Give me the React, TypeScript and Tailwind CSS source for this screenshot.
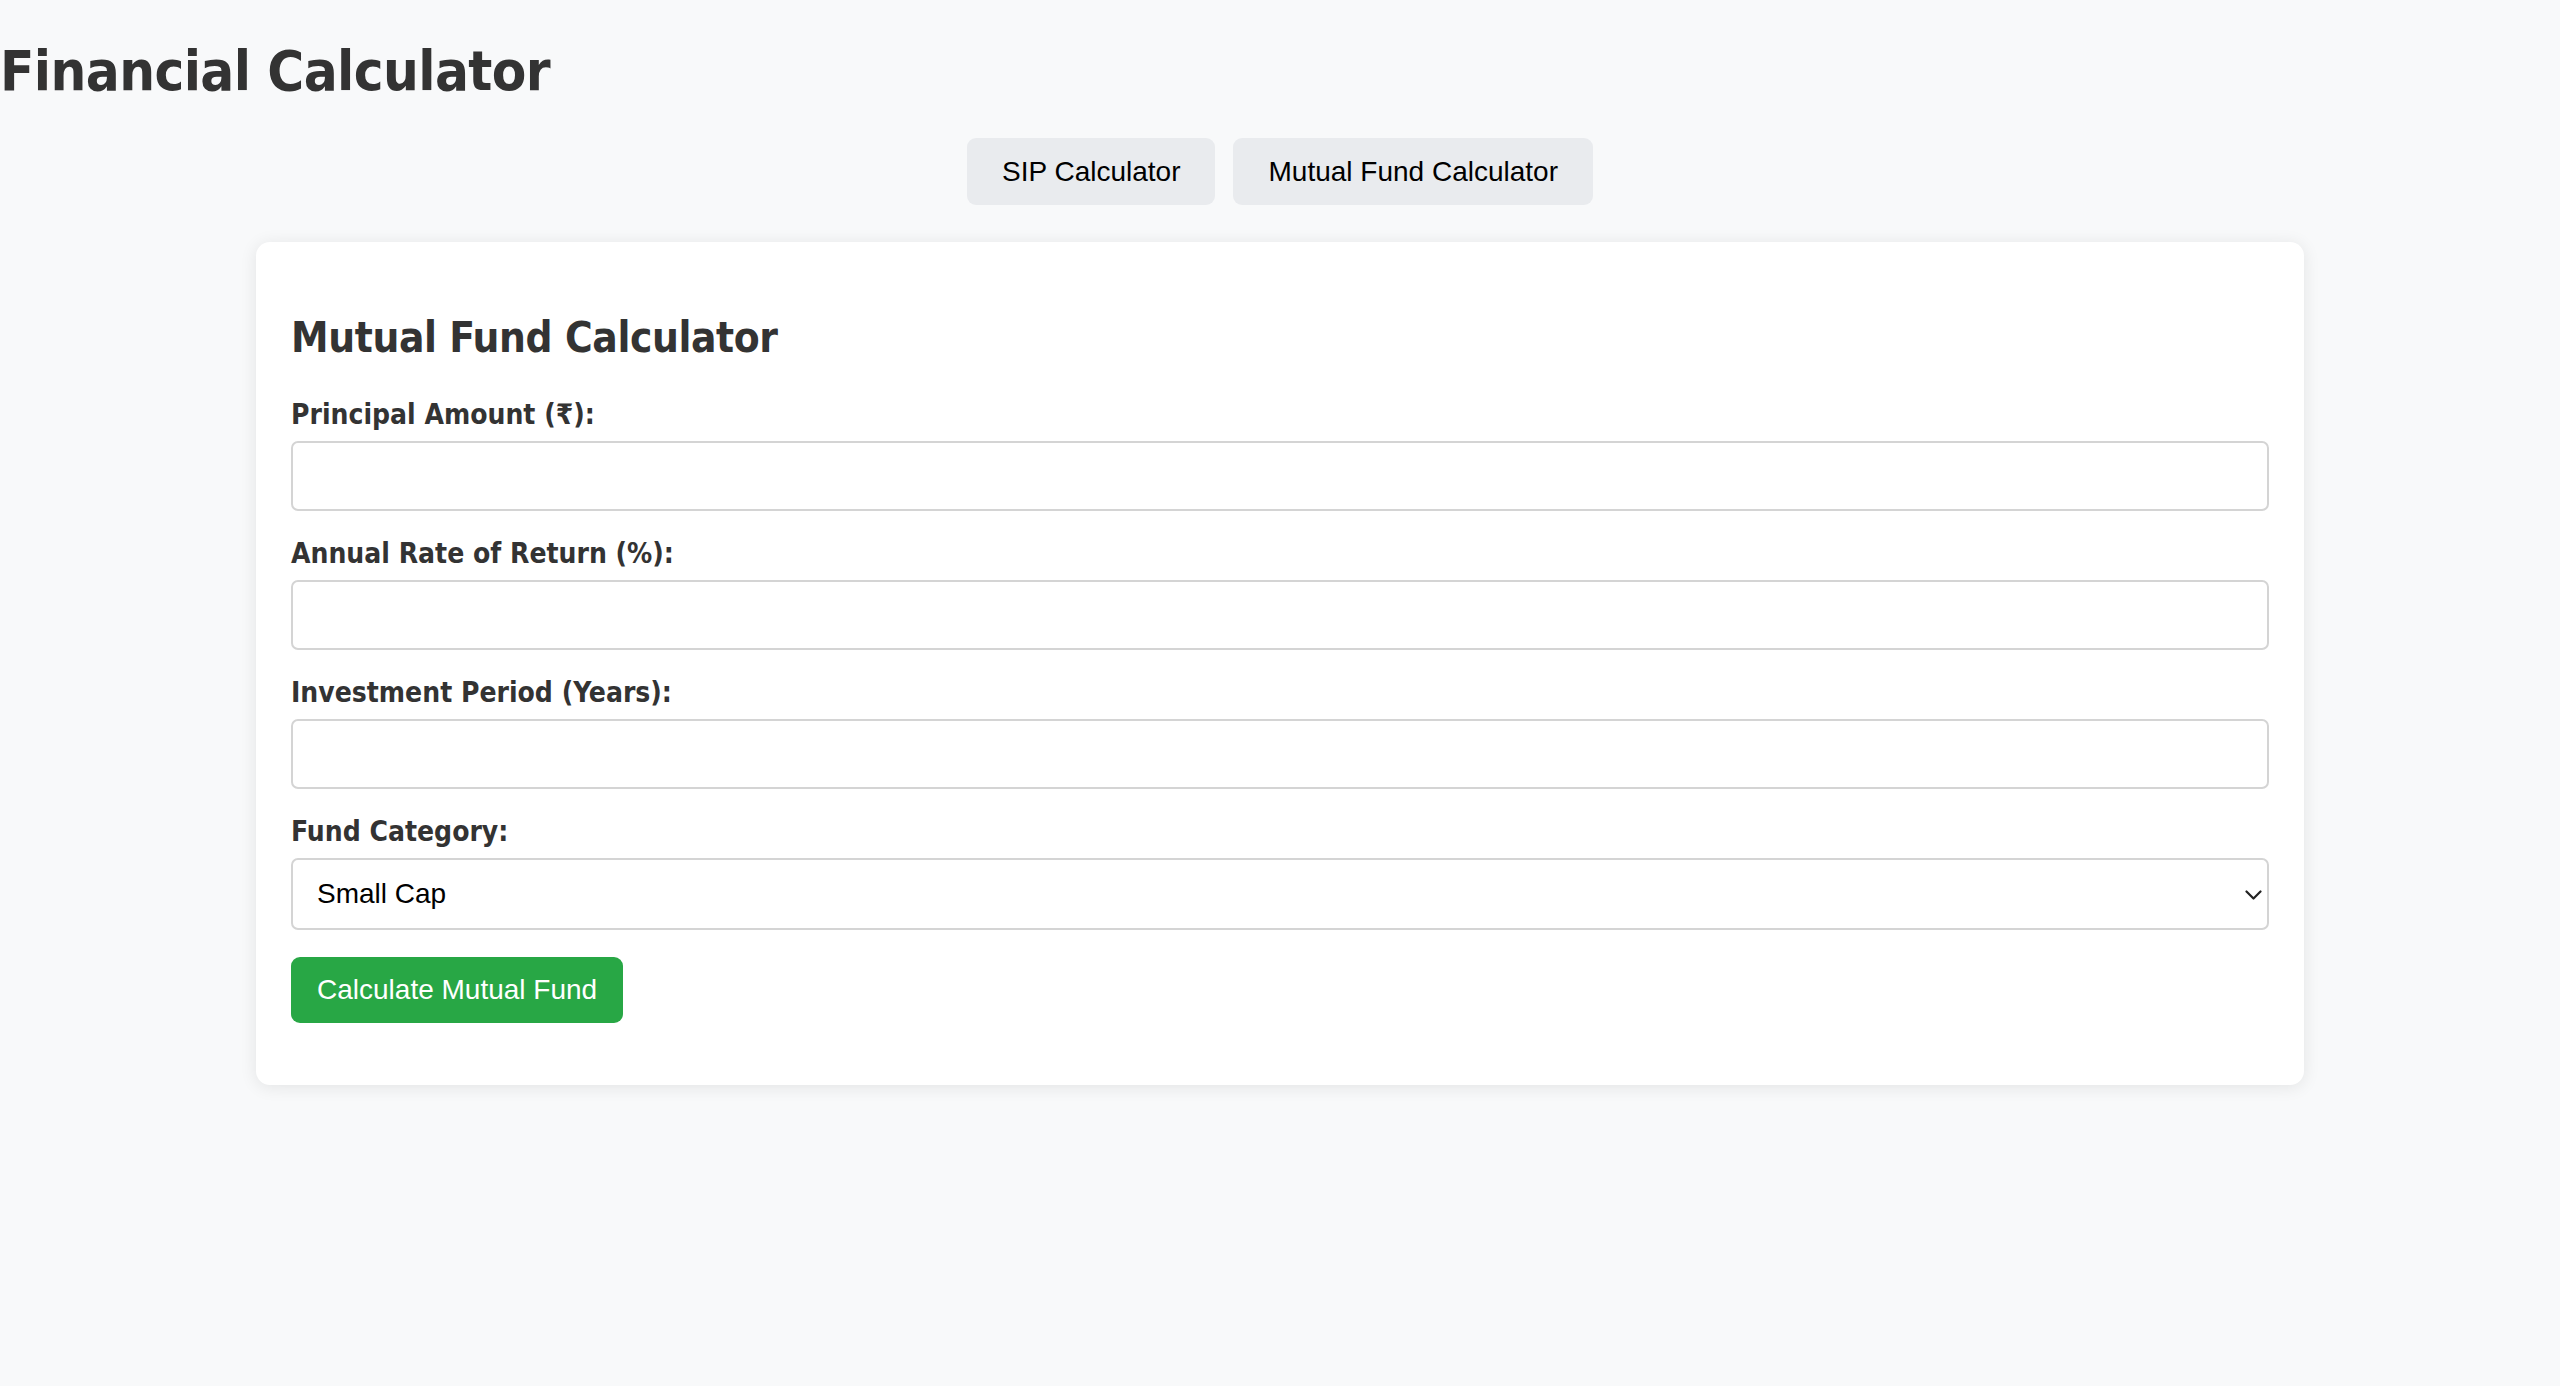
import React from "react";

const labelCls =
  "block text-[28px] leading-[34px] font-bold text-[#333] mb-[9px]";
const inputCls =
  "block w-full h-[70px] rounded-[7px] border-2 border-[#d4d4d4] bg-white px-[17px] text-[28px] outline-none";

export default function App() {
  return (
    <div
      className="min-h-screen w-full bg-[#f8f9fa] text-[#333]"
      style={{ fontFamily: '"DejaVu Sans Condensed", "DejaVu Sans", sans-serif' }}
    >
      <h1 className="m-0 pt-[37px] text-[56px] leading-[68px] font-bold text-[#333] tracking-[-0.6px]">
        Financial Calculator
      </h1>
      <div
        className="mt-[33px] flex justify-center gap-[18px]"
        style={{ fontFamily: '"Liberation Sans", Arial, sans-serif' }}
      >
        <button className="h-[67px] rounded-[9px] bg-[#e9ebee] px-[35px] text-[28px] leading-[32px] text-black">
          SIP Calculator
        </button>
        <button className="h-[67px] rounded-[9px] bg-[#e9ebee] px-[35px] text-[28px] leading-[32px] text-black">
          Mutual Fund Calculator
        </button>
      </div>
      <div className="mx-auto mt-[37px] w-[2048px] rounded-[14px] bg-white px-[35px] pt-[70px] pb-[62px] shadow-[0_2px_17px_rgba(0,0,0,0.09)]">
        <h2 className="m-0 mb-[35px] text-[42px] leading-[51px] font-bold text-[#333] tracking-[-0.4px]">
          Mutual Fund Calculator
        </h2>
        <div className="mb-[26px]">
          <label className={labelCls}>Principal Amount (₹):</label>
          <input type="number" className={inputCls} />
        </div>
        <div className="mb-[26px]">
          <label className={labelCls}>Annual Rate of Return (%):</label>
          <input type="number" className={inputCls} />
        </div>
        <div className="mb-[26px]">
          <label className={labelCls}>Investment Period (Years):</label>
          <input type="number" className={inputCls} />
        </div>
        <div className="mb-[27px]">
          <label className={labelCls}>Fund Category:</label>
          <div className="relative">
            <div
              className="flex h-[72px] w-full items-center rounded-[7px] border-2 border-[#d4d4d4] bg-white pl-[24px] text-[28px] text-black"
              style={{ fontFamily: '"Liberation Sans", Arial, sans-serif' }}
            >
              Small Cap
            </div>
            <svg
              className="absolute right-[7px] top-[32px]"
              width="17"
              height="11"
              viewBox="0 0 17 11"
              fill="none"
            >
              <path
                d="M1.5 1.5 L8.5 8.5 L15.5 1.5"
                stroke="#222"
                strokeWidth="2.2"
                strokeLinecap="round"
                strokeLinejoin="round"
              />
            </svg>
          </div>
        </div>
        <button
          className="h-[66px] rounded-[9px] bg-[#28a745] px-[26px] text-[28px] leading-[32px] text-white"
          style={{ fontFamily: '"Liberation Sans", Arial, sans-serif' }}
        >
          Calculate Mutual Fund
        </button>
      </div>
    </div>
  );
}
